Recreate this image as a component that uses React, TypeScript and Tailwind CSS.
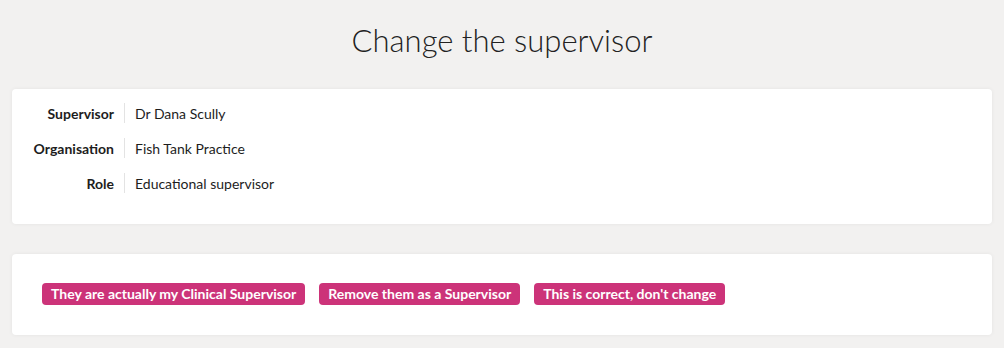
import React from "react";

const rows = [
  { label: "Supervisor", value: "Dr Dana Scully" },
  { label: "Organisation", value: "Fish Tank Practice" },
  { label: "Role", value: "Educational supervisor" },
];

const actions = [
  "They are actually my Clinical Supervisor",
  "Remove them as a Supervisor",
  "This is correct, don't change",
];

const App = () => {
  return (
    <div
      className="min-h-screen bg-[#f2f1f0] text-[#1d1d1d] px-[12px]"
      style={{ fontFamily: "Lato, 'Open Sans', sans-serif" }}
    >
      <h1 className="h-[89px] flex items-center justify-center text-[31px] font-light text-[#222] pb-[8px]">
        Change the supervisor
      </h1>

      <div className="w-[980px] bg-white rounded-[4px] shadow-[0_0_4px_rgba(0,0,0,0.06)] pt-[14px] pb-[31px] flex flex-col gap-[15px]">
        {rows.map(row => (
          <div key={row.label} className="flex items-center h-[20px] text-[14px]">
            <div className="w-[113px] h-full flex items-center justify-end pr-[10px] border-r border-[#e3e3e3] font-bold">
              {row.label}
            </div>
            <div className="pl-[10px]">{row.value}</div>
          </div>
        ))}
      </div>

      <div className="w-[980px] mt-[30px] bg-white rounded-[4px] shadow-[0_0_4px_rgba(0,0,0,0.06)] pt-[29px] pb-[30px] pl-[30px] flex gap-[14px]">
        {actions.map(a => (
          <button
            key={a}
            className="h-[22px] px-[9px] rounded-[4px] bg-[#cc3379] text-white text-[14px] font-bold leading-none"
          >
            {a}
          </button>
        ))}
      </div>
    </div>
  );
};

export default App;
